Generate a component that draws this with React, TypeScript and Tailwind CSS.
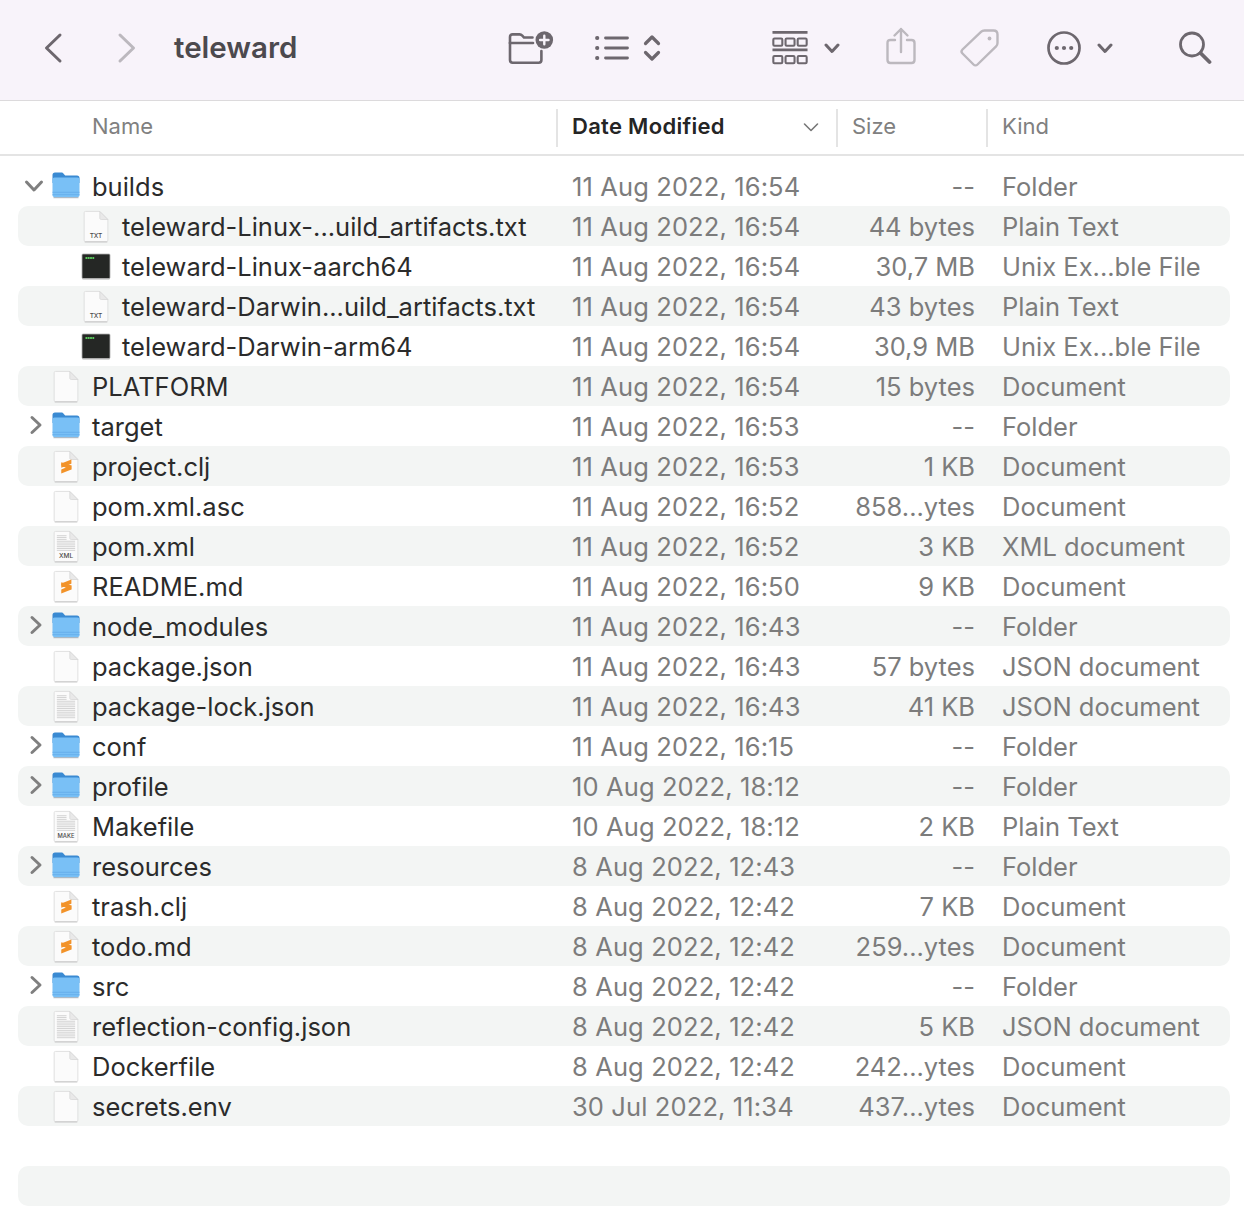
type IconKind = 'folder' | 'txt' | 'exec' | 'blank' | 'subl' | 'xml' | 'lines' | 'make';

type Row = {
    name: string;
    date: string;
    size: string;
    kind: string;
    icon: IconKind;
    child?: boolean;
    arrow?: 'open' | 'closed';
};

const rows: Row[] = [
    { name: 'builds', date: '11 Aug 2022, 16:54', size: '--', kind: 'Folder', icon: 'folder', arrow: 'open' },
    { name: 'teleward-Linux-...uild_artifacts.txt', date: '11 Aug 2022, 16:54', size: '44 bytes', kind: 'Plain Text', icon: 'txt', child: true },
    { name: 'teleward-Linux-aarch64', date: '11 Aug 2022, 16:54', size: '30,7 MB', kind: 'Unix Ex...ble File', icon: 'exec', child: true },
    { name: 'teleward-Darwin...uild_artifacts.txt', date: '11 Aug 2022, 16:54', size: '43 bytes', kind: 'Plain Text', icon: 'txt', child: true },
    { name: 'teleward-Darwin-arm64', date: '11 Aug 2022, 16:54', size: '30,9 MB', kind: 'Unix Ex...ble File', icon: 'exec', child: true },
    { name: 'PLATFORM', date: '11 Aug 2022, 16:54', size: '15 bytes', kind: 'Document', icon: 'blank' },
    { name: 'target', date: '11 Aug 2022, 16:53', size: '--', kind: 'Folder', icon: 'folder', arrow: 'closed' },
    { name: 'project.clj', date: '11 Aug 2022, 16:53', size: '1 KB', kind: 'Document', icon: 'subl' },
    { name: 'pom.xml.asc', date: '11 Aug 2022, 16:52', size: '858...ytes', kind: 'Document', icon: 'blank' },
    { name: 'pom.xml', date: '11 Aug 2022, 16:52', size: '3 KB', kind: 'XML document', icon: 'xml' },
    { name: 'README.md', date: '11 Aug 2022, 16:50', size: '9 KB', kind: 'Document', icon: 'subl' },
    { name: 'node_modules', date: '11 Aug 2022, 16:43', size: '--', kind: 'Folder', icon: 'folder', arrow: 'closed' },
    { name: 'package.json', date: '11 Aug 2022, 16:43', size: '57 bytes', kind: 'JSON document', icon: 'blank' },
    { name: 'package-lock.json', date: '11 Aug 2022, 16:43', size: '41 KB', kind: 'JSON document', icon: 'lines' },
    { name: 'conf', date: '11 Aug 2022, 16:15', size: '--', kind: 'Folder', icon: 'folder', arrow: 'closed' },
    { name: 'profile', date: '10 Aug 2022, 18:12', size: '--', kind: 'Folder', icon: 'folder', arrow: 'closed' },
    { name: 'Makefile', date: '10 Aug 2022, 18:12', size: '2 KB', kind: 'Plain Text', icon: 'make' },
    { name: 'resources', date: '8 Aug 2022, 12:43', size: '--', kind: 'Folder', icon: 'folder', arrow: 'closed' },
    { name: 'trash.clj', date: '8 Aug 2022, 12:42', size: '7 KB', kind: 'Document', icon: 'subl' },
    { name: 'todo.md', date: '8 Aug 2022, 12:42', size: '259...ytes', kind: 'Document', icon: 'subl' },
    { name: 'src', date: '8 Aug 2022, 12:42', size: '--', kind: 'Folder', icon: 'folder', arrow: 'closed' },
    { name: 'reflection-config.json', date: '8 Aug 2022, 12:42', size: '5 KB', kind: 'JSON document', icon: 'lines' },
    { name: 'Dockerfile', date: '8 Aug 2022, 12:42', size: '242...ytes', kind: 'Document', icon: 'blank' },
    { name: 'secrets.env', date: '30 Jul 2022, 11:34', size: '437...ytes', kind: 'Document', icon: 'blank' },
];

function FolderIcon() {
    return (
        <svg width="30" height="28" viewBox="0 0 30 28" className="block mb-[2px]">
            <path d="M1.500 4C1.500 2.400 2.400 1.500 4 1.500h6.200c1.200 0 1.800.5 2.600 1.400L14.200 4.500H26c1.600 0 2.500.9 2.500 2.500v5h-27z" fill="#3a8ad2" />
            <path d="M1.500 8.800C1.500 7.400 2.300 6.600 3.700 6.600h22.600c1.400 0 2.200.8 2.200 2.200V24c0 1.400-.8 2.200-2.200 2.200H3.700c-1.400 0-2.200-.8-2.200-2.200z" fill="#79c0f6" />
            <path d="M1.500 21.300h27M1.500 23.700h27" stroke="#62abe8" strokeWidth="0.8" />
            <path d="M2.500 26.700h25" stroke="#9aa7b3" strokeWidth="0.9" />
        </svg>
    );
}

function Sheet({ children }: { children?: React.ReactNode }) {
    return (
        <svg width="28" height="33" viewBox="0 0 26 30" className="block">
            <path d="M2 2.200C2 1.400 2.400 1 3.200 1H16.500L24 8.500v19.300c0 .8-.4 1.200-1.200 1.200H3.200C2.400 29 2 28.600 2 27.800z" fill="#fbfbfb" stroke="#dcdcdc" strokeWidth="0.8" />
            <path d="M2.500 29.400h21" stroke="#b9b9b9" strokeWidth="0.7" />
            <path d="M16.500 1v6c0 1 .5 1.500 1.500 1.500h6z" fill="#e9e9e9" stroke="#d2d2d2" strokeWidth="0.6" />
            {children}
        </svg>
    );
}

function FileLines({ to }: { to: number }) {
    const ys: number[] = [];
    for (let y = 5; y < to; y += 1.7) ys.push(y);
    return (
        <g stroke="#c6c6c6" strokeWidth="0.7">
            {ys.map(y => (
                <path key={y} d={`M4.500 ${y}h${y < 9 ? 9 : 17}`} />
            ))}
        </g>
    );
}

function FileIcon({ icon }: { icon: IconKind }) {
    if (icon === 'folder') return <FolderIcon />;
    if (icon === 'exec') {
        return (
            <svg width="30" height="27" viewBox="0 0 30 27" className="block">
                <rect x="1" y="1" width="28" height="24.500" rx="1" fill="#252725" stroke="#b0b0b0" strokeWidth="0.8" />
                <path d="M4.500 5h9" stroke="#5cc95e" strokeWidth="1.800" strokeDasharray="1.800 0.500" />
                <path d="M1.500 26.300h27" stroke="#c4c4c4" strokeWidth="0.8" />
            </svg>
        );
    }
    if (icon === 'subl') {
        return (
            <Sheet>
                <path d="M8.600 12.200L18 8.400v4L8.600 16.200zM8.600 13l9.400 3.800v1L8.600 14.500zM8.600 17.700L18 13.900v3.900L8.600 21.600z" fill="#f2932a" />
                <path d="M8.600 14l9.400 3.800V14L8.600 11z" fill="#f2932a" />
            </Sheet>
        );
    }
    if (icon === 'lines') {
        return (
            <Sheet>
                <FileLines to={27} />
            </Sheet>
        );
    }
    const label = icon === 'txt' ? 'TXT' : icon === 'xml' ? 'XML' : icon === 'make' ? 'MAKE' : '';
    return (
        <Sheet>
            {icon === 'xml' || icon === 'make' ? <FileLines to={20} /> : null}
            {label ? (
                <text x="13" y="26" textAnchor="middle" fontSize={icon === 'make' ? 5.4 : 6} fontFamily="Inter, sans-serif" fontWeight="500" fill="#4b4b4b">
                    {label}
                </text>
            ) : null}
        </Sheet>
    );
}

function Chevron() {
    return (
        <svg width="16" height="11" viewBox="0 0 16 11" fill="none" stroke="#6d676e" strokeWidth="3" strokeLinecap="round" strokeLinejoin="round" className="ml-[16px] mt-[2px] shrink-0">
            <path d="M2 2l6 6.500L14 2" />
        </svg>
    );
}

function ToolIcons() {
    return (
        <div className="flex items-center h-full">
            {/* new folder */}
            <svg width="46" height="34" viewBox="0 0 46 34" fill="none" stroke="#6d676e" strokeWidth="2.600" strokeLinecap="round" className="ml-[334px] shrink-0">
                <path d="M2 12V6c0-1.800 1-2.600 2.600-2.600h7c1.200 0 1.900.4 2.700 1.200l1.700 1.900h8.500" />
                <path d="M2 12h23" />
                <path d="M2 12v17c0 1.800 1 2.700 2.700 2.700h26c1.700 0 2.700-.9 2.700-2.700V20" />
                <circle cx="36.300" cy="9" r="8.800" fill="#6d676e" stroke="none" />
                <path d="M36.300 4.800v8.400M32.100 9h8.400" stroke="#f8f3fa" strokeWidth="2.400" />
            </svg>
            {/* list + sort */}
            <svg width="34" height="26" viewBox="0 0 34 26" fill="none" stroke="#6d676e" strokeWidth="2.800" strokeLinecap="round" className="ml-[41px] shrink-0">
                <path d="M10.500 3h22M10.500 13h22M10.500 23h22" />
                <path d="M2 3h.4M2 13h.4M2 23h.4" strokeWidth="3.800" />
            </svg>
            <svg width="20" height="30" viewBox="0 0 20 30" fill="none" stroke="#6d676e" strokeWidth="3.200" strokeLinecap="round" strokeLinejoin="round" className="ml-[13px] shrink-0">
                <path d="M3.500 10.500L10 4l6.500 6.500M3.500 19.500L10 26l6.500-6.500" />
            </svg>
            {/* gallery */}
            <svg width="36" height="36" viewBox="0 0 38 36" fill="none" stroke="#6d676e" className="ml-[110px] shrink-0">
                <path d="M0.500 1.500h37M0.500 20h37" strokeWidth="2.800" />
                <g strokeWidth="2.200">
                    <rect x="1.400" y="8" width="9.500" height="7.600" rx="1.200" />
                    <rect x="14.300" y="8" width="9.500" height="7.600" rx="1.200" />
                    <rect x="27.100" y="8" width="9.500" height="7.600" rx="1.200" />
                    <rect x="1.400" y="26.500" width="9.500" height="7.600" rx="1.200" />
                    <rect x="14.300" y="26.500" width="9.500" height="7.600" rx="1.200" />
                    <rect x="27.100" y="26.500" width="9.500" height="7.600" rx="1.200" />
                </g>
            </svg>
            <Chevron />
            {/* share */}
            <svg width="30" height="38" viewBox="0 0 30 38" fill="none" stroke="#bcb8be" strokeWidth="2.400" strokeLinecap="round" strokeLinejoin="round" className="ml-[46px] mb-[4px] shrink-0">
                <path d="M9 13H4.500C2.500 13 1.500 14 1.500 16v17c0 2 1 3 3 3h21c2 0 3-1 3-3V16c0-2-1-3-3-3H21" />
                <path d="M15 25V2M8.500 8.500L15 2l6.500 6.500" />
            </svg>
            {/* tag */}
            <svg width="40" height="40" viewBox="0 0 40 40" fill="none" stroke="#bcb8be" strokeWidth="2.400" strokeLinejoin="round" className="ml-[44px] shrink-0">
                <path d="M24.500 2.500h9c2.500 0 4 1.500 4 4v8.500c0 1.400-.4 2.400-1.400 3.400L17.500 36.500c-1.200 1.200-2.800 1.200-4 0L2.500 25.500c-1.200-1.200-1.200-2.800 0-4L21 3.800c1-1 2.100-1.300 3.500-1.300z" />
                <circle cx="29.500" cy="10.500" r="1.900" fill="#bcb8be" stroke="none" />
            </svg>
            {/* more */}
            <svg width="34" height="34" viewBox="0 0 34 34" fill="none" stroke="#6d676e" strokeWidth="2.700" className="ml-[47px] shrink-0">
                <circle cx="17" cy="17" r="15.500" />
                <circle cx="9.800" cy="17" r="2.100" fill="#6d676e" stroke="none" />
                <circle cx="17" cy="17" r="2.100" fill="#6d676e" stroke="none" />
                <circle cx="24.200" cy="17" r="2.100" fill="#6d676e" stroke="none" />
            </svg>
            <Chevron />
            {/* search */}
            <svg width="34" height="34" viewBox="0 0 34 34" fill="none" stroke="#6d676e" strokeLinecap="round" className="ml-[65px] shrink-0">
                <circle cx="14" cy="13.500" r="11.500" strokeWidth="2.800" />
                <path d="M22.500 22l9 9" strokeWidth="3.800" />
            </svg>
        </div>
    );
}

function FileRow({ row, index }: { row: Row; index: number }) {
    return (
        <div className={`flex items-center h-10 ml-[18px] mr-[14px] rounded-[10px] ${index % 2 === 1 ? 'bg-[#f3f5f4]' : ''}`}>
            <div className="flex items-center w-[554px] shrink-0">
                <div className="w-[33px] shrink-0 flex justify-center">
                    {row.arrow === 'open' && (
                        <svg width="20" height="14" viewBox="0 0 20 14" fill="none" stroke="#7f7f7f" strokeWidth="3" strokeLinecap="round" strokeLinejoin="round" className="ml-[-1px]">
                            <path d="M2.500 3L10 11l7.500-8" />
                        </svg>
                    )}
                    {row.arrow === 'closed' && (
                        <svg width="14" height="20" viewBox="0 0 14 20" fill="none" stroke="#7f7f7f" strokeWidth="3" strokeLinecap="round" strokeLinejoin="round" className="ml-[3px] mb-[2px]">
                            <path d="M3 2.500L11 10l-8 7.500" />
                        </svg>
                    )}
                </div>
                {row.child && <div className="w-[30px] shrink-0" />}
                <div className="w-[30px] shrink-0 flex justify-center">
                    <FileIcon icon={row.icon} />
                </div>
                <div className="pl-[11px] pt-[2px] text-[#2b2b2b] whitespace-nowrap">{row.name}</div>
            </div>
            <div className="w-[230px] shrink-0 pt-[2px] tracking-[0.12px] text-[#7c7c7c] whitespace-nowrap">{row.date}</div>
            <div className="w-[173px] shrink-0 pt-[2px] text-right text-[#7c7c7c] whitespace-nowrap">{row.size}</div>
            <div className="ml-[27px] pt-[2px] text-[#7c7c7c] whitespace-nowrap">{row.kind}</div>
        </div>
    );
}

export default function App() {
    return (
        <div className="w-[1244px] h-[1226px] bg-white overflow-hidden font-['Inter',sans-serif] text-[25.5px]">
            <header className="flex items-center h-[101px] pb-[5px] bg-[#f8f3fa] border-b border-[#dcdadc]">
                <svg width="22" height="32" viewBox="0 0 22 32" fill="none" stroke="#6d676e" strokeWidth="3" strokeLinecap="round" strokeLinejoin="round" className="ml-[42px] shrink-0">
                    <path d="M18 3L4.500 16 18 29" />
                </svg>
                <svg width="22" height="32" viewBox="0 0 22 32" fill="none" stroke="#bcb8be" strokeWidth="3" strokeLinecap="round" strokeLinejoin="round" className="ml-[52px] shrink-0">
                    <path d="M4 3l13.500 13L4 29" />
                </svg>
                <div className="ml-[36px] w-0 shrink-0 text-[29.5px] font-semibold text-[#4c494e] whitespace-nowrap">teleward</div>
                <ToolIcons />
            </header>
            <div className="flex items-center h-[55px] border-b-2 border-[#e4e4e4] text-[22px] text-[#808080]">
                <div className="pl-[92px] pb-[2px] w-[556px] shrink-0">Name</div>
                <div className="flex items-center justify-between w-[280px] h-[38px] pl-[14px] pr-[17px] pb-[2px] border-l-2 border-[#e4e4e4] shrink-0 text-[#252525] font-semibold">
                    <span className="tracking-[0.3px]">Date Modified</span>
                    <svg width="16" height="10" viewBox="0 0 16 10" fill="none" stroke="#777777" strokeWidth="1.600" strokeLinecap="round" strokeLinejoin="round">
                        <path d="M1.500 2L8 8.500 14.500 2" />
                    </svg>
                </div>
                <div className="w-[150px] h-[38px] flex items-center pl-[14px] pb-[2px] border-l-2 border-[#e4e4e4] shrink-0">Size</div>
                <div className="h-[38px] flex items-center pl-[14px] pb-[2px] border-l-2 border-[#e4e4e4]">Kind</div>
            </div>
            <div className="pt-[10px]">
                {rows.map((row, i) => (
                    <FileRow key={row.name} row={row} index={i} />
                ))}
                <div className="h-10" />
                <div className="h-10 ml-[18px] mr-[14px] rounded-[10px] bg-[#f3f5f4]" />
            </div>
        </div>
    );
}
